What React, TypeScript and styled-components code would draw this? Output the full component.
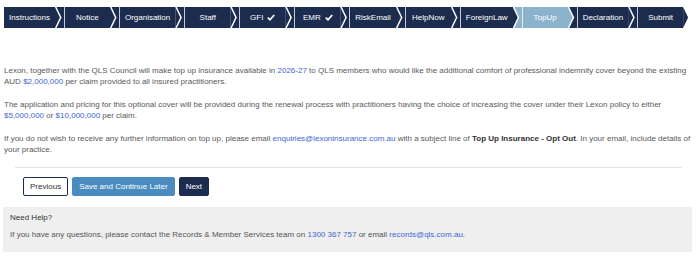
import React from "react";
import styled, { createGlobalStyle } from "styled-components";

const GlobalStyle = createGlobalStyle`
  html, body { margin: 0; padding: 0; background: #ffffff; }
  body { font-family: "Liberation Sans", Arial, sans-serif; }
`;

const NAVY = "#1c2c4e";
const ACTIVE = "#8cb3cc";

const Page = styled.div`
  width: 698px;
  padding-top: 7px;
  font-family: "Liberation Sans", Arial, sans-serif;
`;

const Steps = styled.ul`
  display: flex;
  list-style: none;
  margin: 0 0 0 4px;
  padding: 0;
  height: 21px;
`;

const Step = styled.li<{ $active?: boolean; $first?: boolean }>`
  position: relative;
  display: flex;
  height: 21px;
  background: ${(p) => (p.$active ? ACTIVE : NAVY)};
  padding-left: ${(p) => (p.$first ? 0 : 9)}px;

  &::before {
    content: "";
    position: absolute;
    left: 100%;
    top: 0;
    width: 7px;
    height: 100%;
    background: #ffffff;
    clip-path: polygon(0 0, 1.6px 0, 6.6px 50%, 1.6px 100%, 0 100%);
    z-index: 1;
  }
  &::after {
    content: "";
    position: absolute;
    left: 100%;
    top: 0;
    width: 5px;
    height: 100%;
    background: ${(p) => (p.$active ? ACTIVE : NAVY)};
    clip-path: polygon(0 0, 5px 50%, 0 100%);
    z-index: 2;
  }
`;

const StepLabel = styled.span<{ $first?: boolean }>`
  display: flex;
  align-items: center;
  justify-content: center;
  gap: 4px;
  min-width: 35px;
  padding: 0 5px;
  border-left: ${(p) => (p.$first ? "none" : "1px solid rgba(255,255,255,0.75)")};
  color: #ffffff;
  font-size: 8px;
  line-height: 21px;
  white-space: nowrap;
`;

const Check = () => (
  <svg width="8" height="7" viewBox="0 0 8 7" aria-hidden="true">
    <path d="M0.8 3.6 L3 5.8 L7.2 1" fill="none" stroke="#ffffff" strokeWidth="1.7" />
  </svg>
);

const Content = styled.div`
  padding: 0 4px;
  margin-top: 37px;
`;

const Para = styled.p`
  margin: 0 0 12px;
  font-size: 8px;
  line-height: 11px;
  color: #595959;
`;

const Link = styled.a`
  color: #3f66d4;
  text-decoration: none;
`;

const Strong = styled.strong`
  color: #333333;
  font-weight: bold;
`;

const Actions = styled.div`
  margin: 0 16px 0 15px;
  border-top: 1px solid #e4e4e4;
  padding: 9px 0 0 8px;
  display: flex;
  gap: 4px;
`;

const Button = styled.button<{ $variant: "outline" | "info" | "primary" }>`
  height: 19px;
  padding: 0 6px;
  border-radius: 2px;
  font-family: "Liberation Sans", Arial, sans-serif;
  font-size: 8px;
  cursor: pointer;
  border: 1px solid
    ${(p) => (p.$variant === "outline" ? NAVY : p.$variant === "info" ? "#4a8cbf" : NAVY)};
  background: ${(p) =>
    p.$variant === "outline" ? "#ffffff" : p.$variant === "info" ? "#4a8cbf" : NAVY};
  color: ${(p) => (p.$variant === "outline" ? "#333333" : "#ffffff")};
`;

const Help = styled.div`
  margin: 11px 6px 0 3px;
  background: #efefef;
  padding: 5px 7px 12px;
`;

const HelpLine = styled.p`
  margin: 0 0 6px;
  font-size: 8px;
  line-height: 11px;
  color: #555555;
  &:last-child { margin-bottom: 0; }
`;

const HelpTitle = styled(HelpLine)`
  color: #333333;
`;

const steps: { label: string; done?: boolean; active?: boolean }[] = [
  { label: "Instructions" },
  { label: "Notice" },
  { label: "Organisation" },
  { label: "Staff" },
  { label: "GFI", done: true },
  { label: "EMR", done: true },
  { label: "RiskEmail" },
  { label: "HelpNow" },
  { label: "ForeignLaw" },
  { label: "TopUp", active: true },
  { label: "Declaration" },
  { label: "Submit" },
];

export default function App() {
  return (
    <Page>
      <GlobalStyle />
      <Steps>
        {steps.map((s, i) => (
          <Step key={s.label} $first={i === 0} $active={s.active}>
            <StepLabel $first={i === 0}>
              {s.label}
              {s.done && <Check />}
            </StepLabel>
          </Step>
        ))}
      </Steps>
      <Content>
        <Para>
          Lexon, together with the QLS Council will make top up insurance available in{" "}
          <Link>2026-27</Link> to QLS members who would like the additional comfort of
          professional indemnity cover beyond the existing AUD <Link>$2,000,000</Link> per claim
          provided to all insured practitioners.
        </Para>
        <Para>
          The application and pricing for this optional cover will be provided during the renewal
          process with practitioners having the choice of increasing the cover under their Lexon
          policy to either <Link>$5,000,000</Link> or <Link>$10,000,000</Link> per claim.
        </Para>
        <Para>
          If you do not wish to receive any further information on top up, please email{" "}
          <Link>enquiries@lexoninsurance.com.au</Link> with a subject line of{" "}
          <Strong>Top Up Insurance - Opt Out</Strong>. In your email, include details of your
          practice.
        </Para>
      </Content>
      <Actions>
        <Button $variant="outline">Previous</Button>
        <Button $variant="info">Save and Continue Later</Button>
        <Button $variant="primary">Next</Button>
      </Actions>
      <Help>
        <HelpTitle>Need Help?</HelpTitle>
        <HelpLine>
          If you have any questions, please contact the Records &amp; Member Services team on{" "}
          <Link>1300 367 757</Link> or email <Link>records@qls.com.au</Link>.
        </HelpLine>
      </Help>
    </Page>
  );
}
